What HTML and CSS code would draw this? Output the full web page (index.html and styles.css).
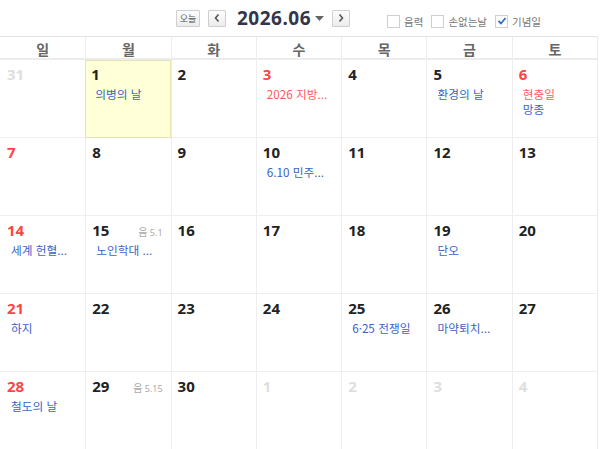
FILE: index.html
```html
<!DOCTYPE html>
<html lang="ko">
<head>
<meta charset="utf-8">
<link rel="stylesheet" href="styles.css">
</head>
<body>
<div class="toolbar">
  <div class="nav">
    <button class="btn today">오늘</button>
    <button class="btn arrow"><svg width="8" height="10" viewBox="0 0 8 10"><path d="M5.5 1.5 L2.5 5 L5.5 8.5" fill="none" stroke="#555" stroke-width="1.6"/></svg></button>
    <div class="title">2026.06</div>
    <svg class="caret" width="9" height="5" viewBox="0 0 9 5"><path d="M0 0 H9 L4.5 5 Z" fill="#666"/></svg>
    <button class="btn arrow next"><svg width="8" height="10" viewBox="0 0 8 10"><path d="M2.5 1.5 L5.5 5 L2.5 8.5" fill="none" stroke="#555" stroke-width="1.6"/></svg></button>
  </div>
  <div class="opts">
    <label class="opt"><span class="box"></span>음력</label>
    <label class="opt"><span class="box"></span>손없는날</label>
    <label class="opt"><span class="box checked"><svg width="10" height="10" viewBox="0 0 10 10"><path d="M1.5 5 L4 7.5 L8.5 2" fill="none" stroke="#2f6fc6" stroke-width="1.8"/></svg></span>기념일</label>
  </div>
</div>
<div class="cal">
  <div class="head">
    <div class="hd">일</div><div class="hd">월</div><div class="hd">화</div><div class="hd">수</div><div class="hd">목</div><div class="hd">금</div><div class="hd">토</div>
  </div>
  <div class="grid">
    <div class="cell"><div class="top"><span class="num other">31</span></div></div>
    <div class="cell today-cell"><div class="top"><span class="num">1</span></div><div class="ev">의병의 날</div></div>
    <div class="cell"><div class="top"><span class="num">2</span></div></div>
    <div class="cell"><div class="top"><span class="num red">3</span></div><div class="ev hol">2026 지방...</div></div>
    <div class="cell"><div class="top"><span class="num">4</span></div></div>
    <div class="cell"><div class="top"><span class="num">5</span></div><div class="ev">환경의 날</div></div>
    <div class="cell"><div class="top"><span class="num red">6</span></div><div class="ev hol">현충일</div><div class="ev">망종</div></div>

    <div class="cell"><div class="top"><span class="num red">7</span></div></div>
    <div class="cell"><div class="top"><span class="num">8</span></div></div>
    <div class="cell"><div class="top"><span class="num">9</span></div></div>
    <div class="cell"><div class="top"><span class="num">10</span></div><div class="ev">6.10 민주...</div></div>
    <div class="cell"><div class="top"><span class="num">11</span></div></div>
    <div class="cell"><div class="top"><span class="num">12</span></div></div>
    <div class="cell"><div class="top"><span class="num">13</span></div></div>

    <div class="cell"><div class="top"><span class="num red">14</span></div><div class="ev">세계 헌혈...</div></div>
    <div class="cell"><div class="top"><span class="num">15</span><span class="lunar"><b>음</b> 5.1</span></div><div class="ev">노인학대 ...</div></div>
    <div class="cell"><div class="top"><span class="num">16</span></div></div>
    <div class="cell"><div class="top"><span class="num">17</span></div></div>
    <div class="cell"><div class="top"><span class="num">18</span></div></div>
    <div class="cell"><div class="top"><span class="num">19</span></div><div class="ev">단오</div></div>
    <div class="cell"><div class="top"><span class="num">20</span></div></div>

    <div class="cell"><div class="top"><span class="num red">21</span></div><div class="ev">하지</div></div>
    <div class="cell"><div class="top"><span class="num">22</span></div></div>
    <div class="cell"><div class="top"><span class="num">23</span></div></div>
    <div class="cell"><div class="top"><span class="num">24</span></div></div>
    <div class="cell"><div class="top"><span class="num">25</span></div><div class="ev">6·25 전쟁일</div></div>
    <div class="cell"><div class="top"><span class="num">26</span></div><div class="ev">마약퇴치...</div></div>
    <div class="cell"><div class="top"><span class="num">27</span></div></div>

    <div class="cell"><div class="top"><span class="num red">28</span></div><div class="ev">철도의 날</div></div>
    <div class="cell"><div class="top"><span class="num">29</span><span class="lunar"><b>음</b> 5.15</span></div></div>
    <div class="cell"><div class="top"><span class="num">30</span></div></div>
    <div class="cell"><div class="top"><span class="num other">1</span></div></div>
    <div class="cell"><div class="top"><span class="num other">2</span></div></div>
    <div class="cell"><div class="top"><span class="num other">3</span></div></div>
    <div class="cell"><div class="top"><span class="num other">4</span></div></div>
  </div>
</div>
</body>
</html>
```
FILE: styles.css
```css
* { box-sizing: border-box; }
html, body { margin: 0; padding: 0; background: #fff; }
body {
  font-family: "Noto Sans", "Noto Sans CJK KR", sans-serif;
  width: 600px;
  height: 449px;
  overflow: hidden;
  color: #222;
}
.toolbar {
  height: 36px;
  position: relative;
  display: flex;
  align-items: center;
}
.nav {
  display: flex;
  align-items: center;
  margin-left: 176px;
}
.btn {
  height: 17px;
  border: 1px solid #cfcfcf;
  background: linear-gradient(#fdfdfd, #ececec);
  padding: 0;
  display: flex;
  align-items: center;
  justify-content: center;
  font-family: "Noto Sans CJK KR", sans-serif;
  color: #555;
  border-radius: 1px;
}
.today { width: 24px; font-size: 9px; line-height: 1; }
.arrow { width: 18px; margin-left: 8px; }
.arrow.next { margin-left: 8px; }
.title {
  font-family: "Noto Sans", sans-serif;
  font-weight: 700;
  font-size: 19px;
  color: #33354a;
  margin-left: 11px;
  letter-spacing: 0.5px;
  line-height: 20px;
}
.caret { margin-left: 4px; margin-top: 1px; }
.opts {
  display: flex;
  align-items: center;
  margin-left: 37px;
  margin-top: 6px;
}
.opt {
  display: flex;
  align-items: center;
  font-family: "Noto Sans CJK KR", sans-serif;
  font-size: 10.5px;
  color: #777;
  margin-right: 8px;
}
.box {
  width: 13px;
  height: 13px;
  border: 1px solid #cfcfcf;
  background: #fff;
  margin-right: 4px;
  display: flex;
  align-items: center;
  justify-content: center;
}
.cal {
  width: 598px;
  border-right: 1px solid #e6ecef;
}
.head {
  display: grid;
  grid-template-columns: repeat(7, 1fr);
  border-top: 1px solid #e3e3e3;
  border-bottom: 2px solid #ececec;
  height: 24px;
}
.hd {
  font-family: "Noto Sans CJK KR", sans-serif;
  font-weight: 700;
  font-size: 14px;
  color: #666;
  text-align: center;
  line-height: 24px;
  border-left: 1px solid #eeeeee;
}
.hd:first-child { border-left: none; }
.grid {
  display: grid;
  grid-template-columns: repeat(7, 1fr);
  grid-auto-rows: 78px;
}
.cell {
  border-left: 1px solid #eeeeee;
  border-bottom: 1px solid #eeeeee;
  padding: 4px 8px 0 6px;
}
.cell:nth-child(7n+1) { border-left: none; padding-left: 7px; }
.today-cell {
  background: #ffffd8;
  border: 1px solid #e4e4b4;
  padding-top: 3px;
  padding-left: 5px;
}
.top {
  display: flex;
  justify-content: space-between;
  align-items: baseline;
  height: 21px;
}
.num {
  font-family: "Noto Sans", sans-serif;
  font-weight: 700;
  font-size: 15px;
  color: #222;
  line-height: 21px;
}
.num.red { color: #ff4444; }
.num.other { color: #dedede; }
.lunar {
  font-family: "Noto Sans", "Noto Sans CJK KR", sans-serif;
  font-size: 9px;
  color: #aaa;
}
.lunar b {
  font-family: "Noto Sans CJK KR", sans-serif;
  font-weight: 400;
  font-size: 10px;
}
.ev {
  font-family: "Noto Sans CJK KR", sans-serif;
  font-size: 11.7px;
  line-height: 15px;
  color: #3a63c8;
  padding-left: 4px;
  white-space: nowrap;
  margin-top: 1px;
}
.ev + .ev { margin-top: 0; }
.ev.hol { color: #ff5a5a; }
```
